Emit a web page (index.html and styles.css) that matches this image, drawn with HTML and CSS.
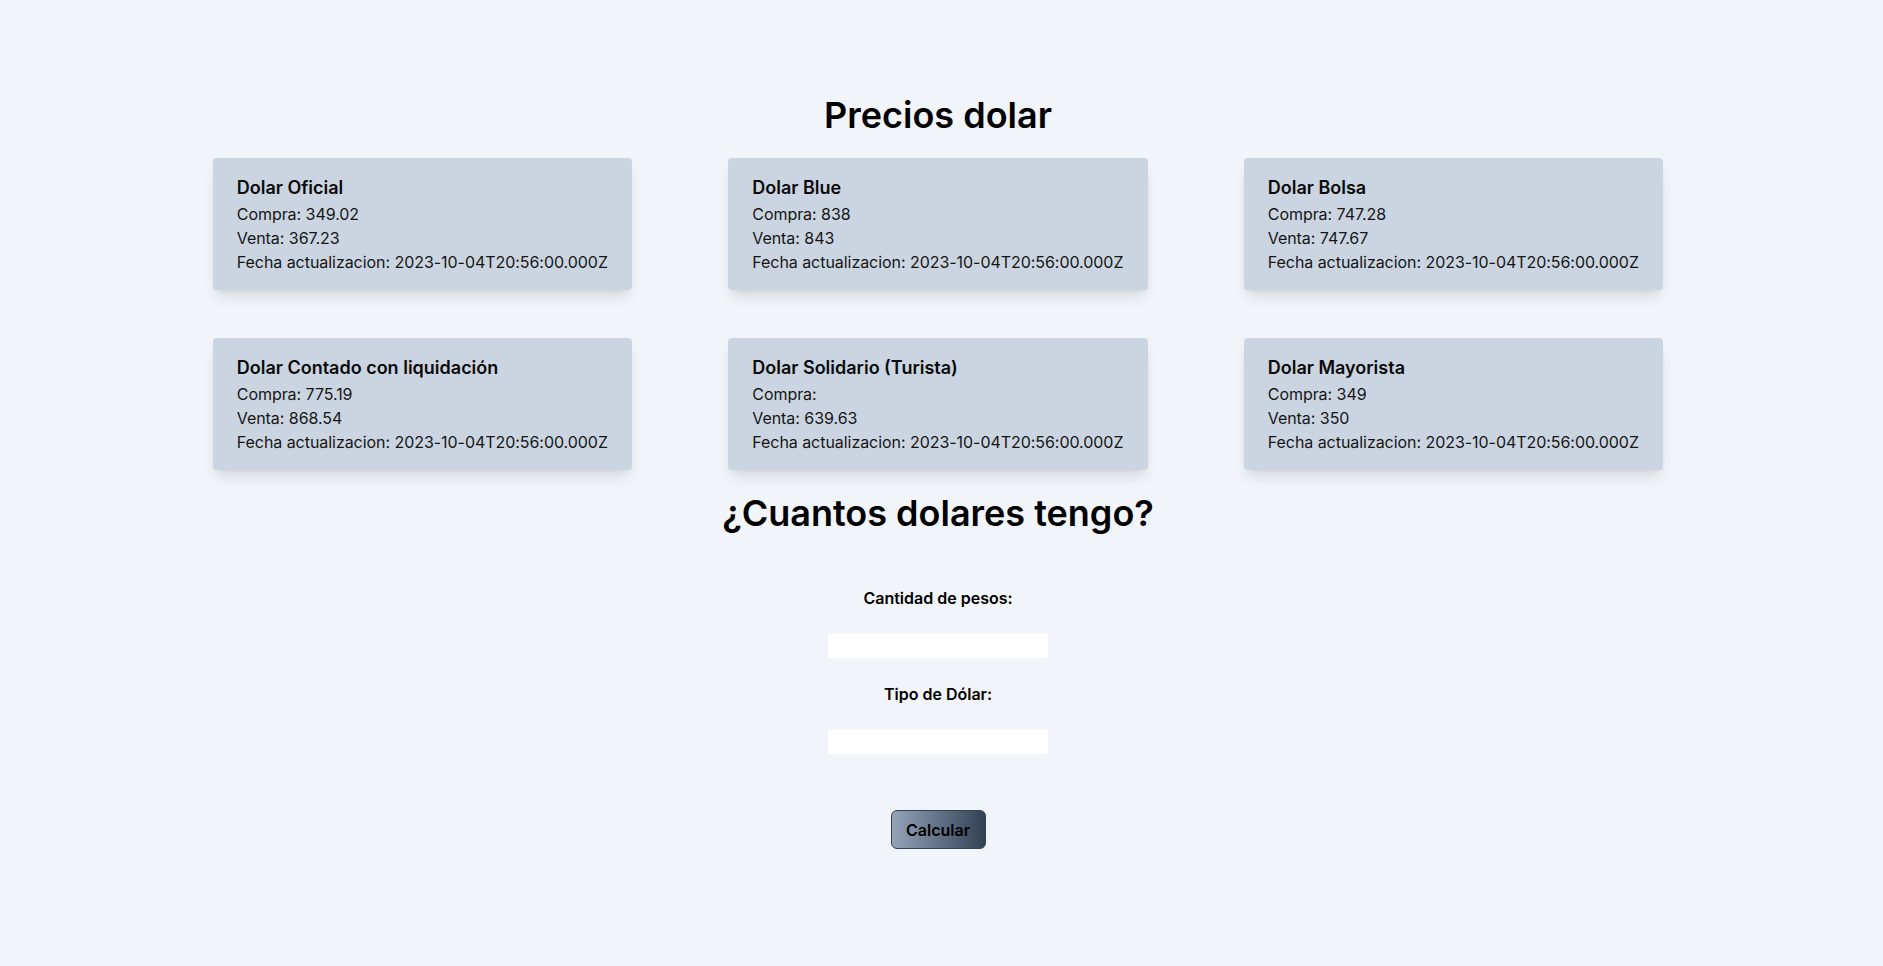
FILE: index.html
```html
<!DOCTYPE html>
<html lang="es">
<head>
<meta charset="utf-8">
<title>Precios dolar</title>
<link rel="stylesheet" href="styles.css">
</head>
<body>
<main class="page">
  <h1 class="title">Precios dolar</h1>
  <section class="cards">
    <div class="card">
      <h2 class="card-title">Dolar Oficial</h2>
      <p>Compra: 349.02</p>
      <p>Venta: 367.23</p>
      <p>Fecha actualizacion: 2023-10-04T20:56:00.000Z</p>
    </div>
    <div class="card">
      <h2 class="card-title">Dolar Blue</h2>
      <p>Compra: 838</p>
      <p>Venta: 843</p>
      <p>Fecha actualizacion: 2023-10-04T20:56:00.000Z</p>
    </div>
    <div class="card">
      <h2 class="card-title">Dolar Bolsa</h2>
      <p>Compra: 747.28</p>
      <p>Venta: 747.67</p>
      <p>Fecha actualizacion: 2023-10-04T20:56:00.000Z</p>
    </div>
    <div class="card">
      <h2 class="card-title">Dolar Contado con liquidación</h2>
      <p>Compra: 775.19</p>
      <p>Venta: 868.54</p>
      <p>Fecha actualizacion: 2023-10-04T20:56:00.000Z</p>
    </div>
    <div class="card">
      <h2 class="card-title">Dolar Solidario (Turista)</h2>
      <p>Compra: </p>
      <p>Venta: 639.63</p>
      <p>Fecha actualizacion: 2023-10-04T20:56:00.000Z</p>
    </div>
    <div class="card">
      <h2 class="card-title">Dolar Mayorista</h2>
      <p>Compra: 349</p>
      <p>Venta: 350</p>
      <p>Fecha actualizacion: 2023-10-04T20:56:00.000Z</p>
    </div>
  </section>
  <h1 class="title title-2">¿Cuantos dolares tengo?</h1>
  <form class="calc">
    <label class="label" for="pesos">Cantidad de pesos:</label>
    <input class="field" id="pesos" type="text">
    <label class="label" for="tipo">Tipo de Dólar:</label>
    <input class="field" id="tipo" type="text">
    <button class="btn" type="button">Calcular</button>
  </form>
</main>
</body>
</html>
```

FILE: styles.css
```css
* { box-sizing: border-box; }
html, body { margin: 0; padding: 0; }
body {
  background: #f1f4f9;
  font-family: Inter, "Noto Sans", sans-serif;
  color: #000;
}
.page {
  padding: 95px 7px 0 0;
  display: flex;
  flex-direction: column;
  align-items: center;
}
.title {
  margin: 0;
  font-size: 36px;
  line-height: 40px;
  font-weight: 600;
}
.cards {
  margin-top: 23px;
  display: grid;
  grid-template-columns: repeat(3, 419.5px);
  column-gap: 96px;
  row-gap: 48px;
}
.card {
  background: #cbd5e1;
  border-radius: 4px;
  padding: 16px 24px;
  box-shadow: 0 10px 15px -3px rgba(0,0,0,0.1), 0 4px 6px -4px rgba(0,0,0,0.1);
  height: 132px;
  white-space: nowrap;
}
.card-title {
  margin: 0;
  font-size: 18px;
  line-height: 28px;
  font-weight: 600;
  color: #0a0a0a;
}
.card p {
  margin: 0;
  font-size: 16px;
  line-height: 24px;
  font-weight: 400;
  letter-spacing: -0.05px;
  color: #151515;
}
.title-2 { margin-top: 23px; }
.calc {
  margin-top: 53px;
  display: flex;
  flex-direction: column;
  align-items: center;
}
.label {
  font-size: 16px;
  line-height: 24px;
  font-weight: 600;
}
.field {
  margin: 24px 0;
  width: 220px;
  height: 24px;
  border: 0;
  padding: 0;
  background: #fff;
  font-family: inherit;
}
.btn {
  margin-top: 32px;
  width: 95px;
  height: 39px;
  border: 1px solid #334155;
  border-radius: 6px;
  background: linear-gradient(to right, #94a3b8, #334155);
  font-family: inherit;
  font-size: 16px;
  font-weight: 600;
  color: #000;
  padding: 0;
}
```
